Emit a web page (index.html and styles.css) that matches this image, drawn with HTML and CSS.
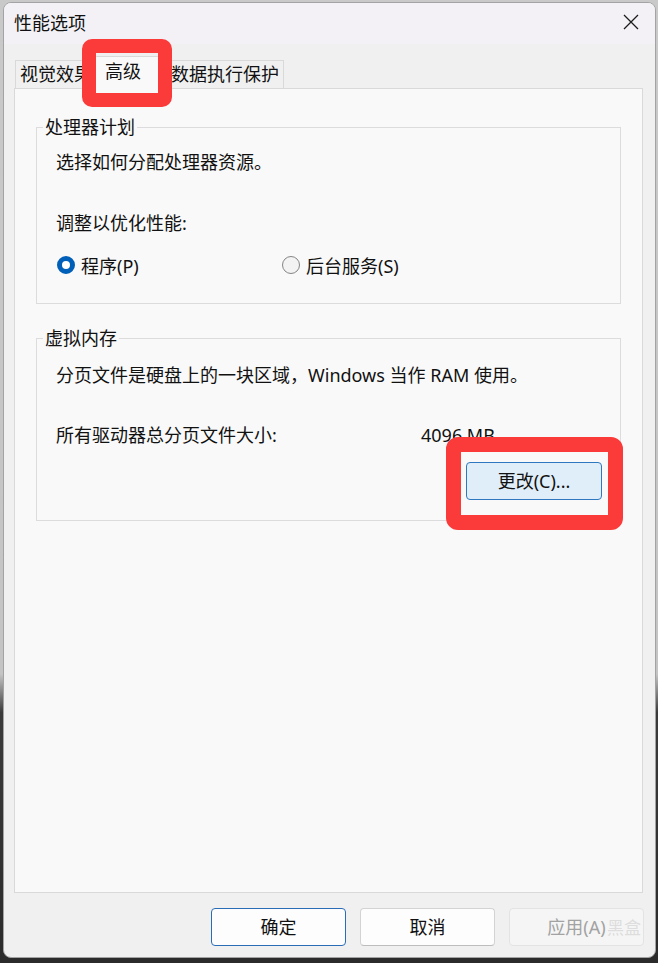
FILE: index.html
```html
<!DOCTYPE html>
<html lang="zh-CN">
<head>
<meta charset="utf-8">
<title>性能选项</title>
<link rel="stylesheet" href="styles.css">
</head>
<body>
<div class="window">
  <div class="titlebar">
    <span class="title">性能选项</span>
    <svg class="close" width="16" height="16" viewBox="0 0 16 16"><path d="M1 1L15 15M15 1L1 15" stroke="#1b1b1b" stroke-width="1.3" fill="none"/></svg>
  </div>
  <div class="main">
    <div class="tabs">
      <div class="tab">视觉效果</div>
      <div class="tab active">高级</div>
      <div class="tab">数据执行保护</div>
    </div>
    <div class="panel">
      <fieldset class="group g1">
        <legend>处理器计划</legend>
        <div class="line l1">选择如何分配处理器资源。</div>
        <div class="line l2">调整以优化性能:</div>
        <div class="radios">
          <div class="radio-item first"><span class="radio checked"></span><span>程序(P)</span></div>
          <div class="radio-item"><span class="radio"></span><span>后台服务(S)</span></div>
        </div>
      </fieldset>
      <fieldset class="group g2">
        <legend>虚拟内存</legend>
        <div class="line m1">分页文件是硬盘上的一块区域，Windows 当作 RAM 使用。</div>
        <div class="line m2 sizes"><span>所有驱动器总分页文件大小:</span><span>4096 MB</span></div>
        <div class="btnrow"><button class="btn change">更改(C)...</button></div>
      </fieldset>
    </div>
  </div>
  <div class="footer">
    <button class="btn default">确定</button>
    <button class="btn">取消</button>
    <button class="btn disabled">应用(A)</button>
  </div>
</div>
<div class="mark mark1"></div>
<div class="mark mark2"></div>
<div class="watermark">黑盒</div>
</body>
</html>
```
FILE: styles.css
```css
html, body {
  margin: 0;
  padding: 0;
}
body {
  width: 658px;
  height: 963px;
  overflow: hidden;
  position: relative;
  background: linear-gradient(to bottom, #c9c9c9 0%, #c4c4c4 70%, #3a3a3a 74%, #2b2b2b 100%);
  font-family: "Noto Sans", "Noto Sans CJK SC", sans-serif;
  font-size: 18px;
  color: #111111;
}
.window {
  box-sizing: border-box;
  margin: 2px 0 0 3px;
  width: 653px;
  height: 956px;
  border: 1px solid #a3a3a3;
  border-radius: 8px;
  overflow: hidden;
  background: #f0f0f0;
  display: flex;
  flex-direction: column;
}
.titlebar {
  height: 41px;
  flex: none;
  background: #f3f1f6;
  display: flex;
  align-items: center;
  justify-content: space-between;
  padding: 0 16px 0 10px;
}
.title {
  line-height: 24px;
  margin-top: -2px;
}
.close {
  display: block;
  margin-top: -3px;
}
.main {
  padding: 16px 12px 0 10px;
}
.tabs {
  height: 28px;
  display: flex;
  align-items: flex-end;
  padding-left: 1px;
  position: relative;
  z-index: 1;
}
.tab {
  box-sizing: border-box;
  height: 28px;
  line-height: 27px;
  padding: 0 4px;
  border: 1px solid #d9d9d9;
  border-bottom: none;
  background: #f0f0f0;
}
.tab.active {
  height: 33px;
  margin: 0 -2px -1px;
  padding: 1px 26px 0 9px;
  background: #f9f9f9;
  position: relative;
  z-index: 2;
}
.panel {
  box-sizing: border-box;
  height: 805px;
  border: 1px solid #d9d9d9;
  background: #f9f9f9;
  padding: 26px 21px 0 21px;
}
.group {
  margin: 0;
  border: 1px solid #dcdcdc;
  padding: 0 18px 26px 19px;
  min-width: 0;
}
.group legend {
  padding: 0 2px;
  margin-left: -13px;
  line-height: 24px;
}
.line {
  line-height: 24px;
}
.l1 { margin-top: 11px; }
.l2 { margin-top: 37px; }
.radios {
  margin-top: 18px;
  display: flex;
  height: 24px;
  align-items: center;
}
.radio-item {
  display: flex;
  align-items: center;
  gap: 6px;
}
.radio-item.first {
  width: 225px;
  margin-left: 1px;
}
.radio {
  box-sizing: border-box;
  width: 18px;
  height: 18px;
  border-radius: 50%;
  border: 1px solid #858585;
  background: #f3f3f3;
  flex: none;
}
.radio.checked {
  border: 5px solid #005fb8;
  background: #ffffff;
}
.g2 {
  margin-top: 22px;
  padding-bottom: 20px;
}
.m1 { margin-top: 13px; }
.m2 { margin-top: 36px; }
.sizes {
  display: grid;
  grid-template-columns: 365px auto;
}
.btnrow {
  margin-top: 15px;
  display: flex;
  justify-content: flex-end;
}
.btn {
  box-sizing: border-box;
  width: 135px;
  height: 38px;
  font-family: inherit;
  font-size: 18px;
  color: #111111;
  background: #fdfdfd;
  border: 1px solid #d3d3d3;
  border-bottom-color: #bdbdbd;
  border-radius: 4px;
  padding: 0;
  line-height: 24px;
}
.btn.change {
  width: 136px;
  background: #e0eef9;
  border: 1px solid #2f78c0;
}
.footer {
  display: flex;
  justify-content: flex-end;
  gap: 14px;
  padding: 15px 11px 0 0;
}
.btn.default {
  border: 1px solid #2a6db6;
}
.btn.disabled {
  background: #f5f5f5;
  border: 1px solid #e3e3e3;
  color: #a2a2a2;
}
.mark {
  position: absolute;
  box-sizing: border-box;
  border: 14px solid #fb3a3a;
  border-radius: 10px;
  z-index: 5;
}
.mark1 {
  left: 82px;
  top: 39px;
  width: 90px;
  height: 68px;
}
.mark2 {
  left: 446px;
  top: 437px;
  width: 177px;
  height: 93px;
  border-width: 15px;
  border-radius: 12px;
}
.watermark {
  position: absolute;
  left: 607px;
  top: 916px;
  line-height: 24px;
  font-size: 17px;
  color: rgba(200, 200, 200, 0.55);
  z-index: 6;
}
```
